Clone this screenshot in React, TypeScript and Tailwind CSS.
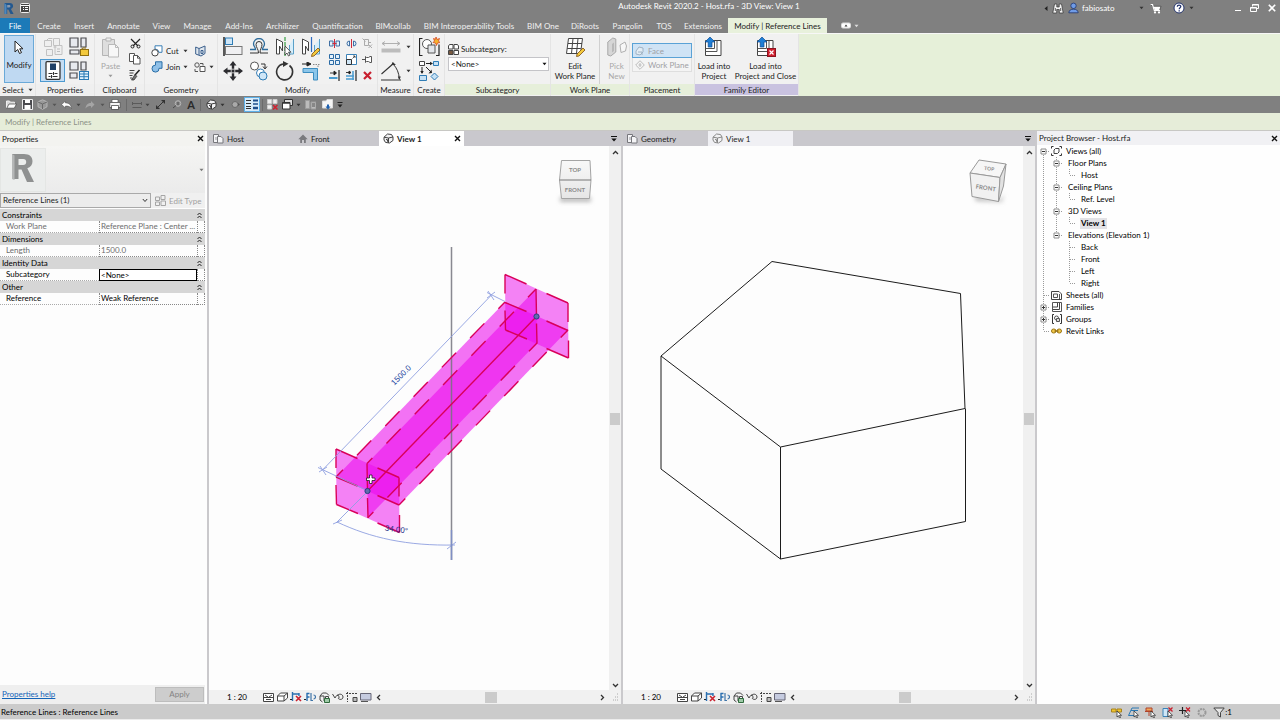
import React from "react";
import type { ReactNode } from "react";

/* ---------- shared pieces ---------- */

function Icon({ w = 12, h = 12, children }: { w?: number; h?: number; children: ReactNode }) {
  return (
    <svg width={w} height={h} viewBox={`0 0 ${w} ${h}`} fill="none" className="block shrink-0" aria-hidden="true">
      {children}
    </svg>
  );
}

function Caret({ color = "#333" }: { color?: string }) {
  return (
    <Icon w={5} h={4}>
      <path d="M.5 .8h4L2.500 3.200z" fill={color} />
    </Icon>
  );
}

function CloseIcon({ color = "#111" }: { color?: string }) {
  return (
    <Icon w={7} h={7}>
      <path d="M1 1l5 5M6 1L1 6" stroke={color} strokeWidth="1.400" />
    </Icon>
  );
}

function PagesIcon() {
  return (
    <Icon w={11} h={11}>
      <path d="M.5 1.500h5v8h-5z" fill="#f4f4f6" stroke="#77777c" />
      <path d="M4.500 3.500h3.500l2 2v4.500h-5.500z" fill="#f4f4f6" stroke="#77777c" />
      <path d="M3 4v3" stroke="#99999e" />
    </Icon>
  );
}

function HomeIcon() {
  return (
    <Icon w={10} h={10}>
      <path d="M5 .5L.3 5.200h1.900V9h5.600V5.200h1.900z" fill="#7a7a7e" />
      <path d="M4 6h2v3H4z" fill="#c9c8cd" />
    </Icon>
  );
}

function BoxIcon({ color = "#444" }: { color?: string }) {
  return (
    <Icon w={11} h={11}>
      <path d="M1 4.200L4.500 1l4 .5L10 4v3.500L6.500 10l-4-.6L1 7z" fill="#f2f2f4" stroke={color} />
      <path d="M1 4.200l4.500.8v5M5.500 5L10 4" stroke={color} />
      <path d="M3 6.500l1.500.2v2" stroke={color} />
    </Icon>
  );
}

/* ---------- title bar ---------- */

function TitleBar() {
  return (
    <header className="flex h-[18px] items-center text-white">
      <div className="flex items-center gap-1.5 pb-0.5 pl-[3px]">
        <Icon w={11} h={13}>
          <path d="M1.500 1h5.300c2 0 3.300 1.200 3.300 3 0 1.500-.9 2.500-2.200 2.900L10.600 12H7.500L5.300 7.500H4.200V12H1.500z" fill="#24588f" />
          <path d="M4.200 3v2.400h2c.8 0 1.200-.5 1.200-1.200S7 3 6.200 3z" fill="#8b9aad" />
          <path d="M1.500 1l2 2v9h-2z" fill="#4d87bd" />
        </Icon>
        <Icon w={10} h={10}>
          <rect x=".5" y=".5" width="9" height="9" rx="1" fill="#444" stroke="#eee" />
          <path d="M1 2.500h8M3 4.500h1M5 4.500h3M3 6.500h1M5 6.500h3" stroke="#fff" />
        </Icon>
      </div>
      <h1 className="flex-1 pb-1.5 pl-[348px] text-center">Autodesk Revit 2020.2 - Host.rfa - 3D View: View 1</h1>
      <div className="flex w-[240px] items-center pb-0.5">
        <button aria-label="Collapse search" className="flex w-[12px] justify-center">
          <Icon w={4} h={5}>
            <path d="M3.500 0v5L.5 2.500z" fill="#222" />
          </Icon>
        </button>
        <button aria-label="Search" className="flex w-[12px] justify-center">
          <Icon w={12} h={11}>
            <path d="M2.500 1h2.300v3h2.400V1h2.300l1.700 9H7.300V6.500H4.700V10H.8z" fill="#f3f3f3" stroke="#333" strokeWidth=".7" />
            <path d="M3.300 5v3M8.700 5v3" stroke="#333" strokeWidth=".8" />
          </Icon>
        </button>
        <button className="flex flex-1 items-center gap-[3px] pl-1">
          <Icon w={11} h={12}>
            <circle cx="5.500" cy="3.800" r="2.700" fill="#6f9be6" stroke="#1f356d" strokeWidth=".8" />
            <path d="M.8 10.800c.3-2.600 2-3.600 4.700-3.600s4.400 1 4.700 3.600z" fill="#6f9be6" stroke="#1f356d" strokeWidth=".8" />
          </Icon>
          <span>fabiosato</span>
          <span className="flex flex-1 justify-end pr-px">
            <Caret color="#333" />
          </span>
        </button>
        <button aria-label="App store" className="flex w-[21px] justify-center">
          <Icon w={12} h={11}>
            <path d="M.5 1.500h2l1.800 6h5.200l1.500-4.200H3.200z" fill="#fff" stroke="#222" strokeWidth=".6" />
            <path d="M.5 1.500h2l1.800 6h5.700" stroke="#fff" strokeWidth="1.200" />
            <circle cx="5" cy="9.400" r="1.100" fill="#fff" />
            <circle cx="9" cy="9.400" r="1.100" fill="#fff" />
          </Icon>
        </button>
        <button aria-label="Help" className="flex w-[33px] items-center justify-center gap-1 pl-0.5">
          <Icon w={12} h={12}>
            <circle cx="6" cy="6" r="5" fill="#fff" stroke="#24346d" />
            <path d="M4.300 4.800c0-2.200 3.500-2.200 3.500-.2 0 1.200-1.600 1.200-1.600 2.600M6.200 8.200v1.200" stroke="#24346d" strokeWidth="1.300" />
          </Icon>
          <Caret color="#333" />
        </button>
        <div className="ml-auto flex items-center gap-[9px] pr-1 pl-9">
          <button aria-label="Minimize">
            <Icon w={6} h={8}>
              <path d="M0 6.500h6" stroke="#fff" />
            </Icon>
          </button>
          <button aria-label="Restore">
            <Icon w={9} h={8}>
              <path d="M2.500 2.500v-2h6v4h-2M2 1h6.500" stroke="#fff" />
              <path d="M.5 3.500h6v4h-6zM.5 4h6" stroke="#fff" />
            </Icon>
          </button>
          <button aria-label="Close">
            <Icon w={8} h={8}>
              <path d="M.8.8l6.400 6.400M7.200.8L.8 7.200" stroke="#fff" strokeWidth="1.600" />
            </Icon>
          </button>
        </div>
      </div>
    </header>
  );
}

const RIBBON_TABS: [string, string][] = [
  ["Create", "w-[38px]"],
  ["Insert", "w-[32px]"],
  ["Annotate", "w-[47px]"],
  ["View", "w-[29px]"],
  ["Manage", "w-[43px]"],
  ["Add-Ins", "w-[40px]"],
  ["Archilizer", "w-[47px]"],
  ["Quantification", "w-[63px]"],
  ["BIMcollab", "w-[48px]"],
  ["BIM Interoperability Tools", "w-[104px]"],
  ["BIM One", "w-[44px]"],
  ["DiRoots", "w-[40px]"],
  ["Pangolin", "w-[45px]"],
  ["TQS", "w-[28px]"],
  ["Extensions", "w-[50px]"],
];

function RibbonTabs() {
  return (
    <nav className="flex h-[15px] items-stretch whitespace-nowrap text-[#f0f0f0]">
      <button className="w-[30px] bg-[#1c7ab8] text-white">File</button>
      {RIBBON_TABS.map(([label, width]) => (
        <button key={label} className={`flex items-center justify-center ${width}`}>
          {label}
        </button>
      ))}
      <button className="flex w-[99px] items-center justify-center bg-[#e8f1dc] text-[#222]">Modify | Reference Lines</button>
      <button aria-label="Ribbon display" className="ml-3.5 flex items-center gap-[3px]">
        <Icon w={10} h={7}>
          <rect x=".5" y="1" width="9" height="5" rx="1.500" fill="#fff" stroke="#ddd" />
          <path d="M3.500 4.500L5 2.500l1.500 2z" fill="#333" />
        </Icon>
        <Caret color="#ddd" />
      </button>
    </nav>
  );
}

/* ---------- ribbon ---------- */

type Tone = "plain" | "green" | "violet";

function Panel({ title, width, tone = "plain", caret, children }: { title: string; width: string; tone?: Tone; caret?: boolean; children: ReactNode }) {
  const label =
    tone === "green" ? "bg-[#e6efda]" : tone === "violet" ? "bg-[#c9c2e0]" : "bg-[#efefef]";
  return (
    <section className={`flex shrink-0 flex-col border-r border-[#e4e4e4] bg-[#f1f1f1] pb-px ${width}`}>
      <div className="flex min-h-0 flex-1 items-start pt-px">{children}</div>
      <h2 className={`flex h-[11px] shrink-0 items-center justify-center gap-1 whitespace-nowrap ${label}`}>
        {title}
        {caret && <Caret />}
      </h2>
    </section>
  );
}

function Tool({ label, size = "h-[23px] w-[26px]", children }: { label: string; size?: string; children: ReactNode }) {
  return (
    <button aria-label={label} className={`flex items-center justify-center ${size}`}>
      {children}
    </button>
  );
}

function PropertyTools() {
  return (
    <div className="grid grid-cols-[26px_26px] gap-y-px pl-1">
      <Tool label="Family category">
        <Icon w={20} h={20}>
          <path d="M1.500 3.500h7v6h-7zM10.500 1.500h6v7h-6zM3.500 12.500h6v6h-6zM12 8.500h7v9h-7z" fill="#efefef" stroke="#c2c2c2" />
          <path d="M3.500 3.500l2-2h4M10.500 10h3M14 12h3M14 14.500h3" stroke="#bdbdbd" />
        </Icon>
      </Tool>
      <Tool label="Type properties">
        <Icon w={20} h={20}>
          <path d="M1 1h8v9H1zM12 1h5v9h-5zM1 13h9v4H1z" fill="#e7e9ee" stroke="#4c4c50" strokeWidth="1.200" />
          <rect x="11.500" y="12.500" width="8" height="6" fill="#f3c93c" stroke="#8f6f10" />
          <path d="M12 12.500l2-1.500h3" stroke="#8f6f10" />
        </Icon>
      </Tool>
      <Tool label="Properties" size="h-[23px] w-[25px] border border-[#4d9ad0] bg-[#c5ddf3]">
        <Icon w={16} h={19}>
          <rect x="1" y=".7" width="14" height="17.600" rx="1" fill="#fff" stroke="#333" strokeWidth="1.300" />
          <path d="M5 2.500h6v6.500H5z" fill="#1e3f66" />
          <path d="M3.500 12.500h4M9.500 12.500h3M3.500 15.500h2M7.500 15.500h5M8.500 11v3M6.500 14v3" stroke="#333" />
        </Icon>
      </Tool>
      <Tool label="Family types">
        <Icon w={20} h={20}>
          <path d="M1 1h8v8H1zM12 1h5v8h-5zM1 12h7v5H1z" fill="#e7e9ee" stroke="#4c4c50" strokeWidth="1.200" />
          <rect x="10.500" y="10.500" width="9" height="8" fill="#e2f2fc" stroke="#2a7ab4" />
          <path d="M10.500 13h9M10.500 15.700h9M15 10.500v8" stroke="#2a7ab4" />
        </Icon>
      </Tool>
    </div>
  );
}

function ClipboardTools() {
  return (
    <>
      <button className="flex w-[32px] flex-col items-center pt-0.5 text-[#a6a6a6]">
        <Icon w={19} h={21}>
          <path d="M1.500 2.500h12v16h-12z" fill="#dedede" stroke="#b5b5b5" />
          <path d="M5 1h5v3H5z" fill="#eee" stroke="#b5b5b5" />
          <path d="M7.500 7.500h7l3 3v9.500h-10z" fill="#f7f7f7" stroke="#b9b9b9" />
          <path d="M14.500 7.500v3h3" stroke="#b9b9b9" />
        </Icon>
        <span className="mt-0.5 mb-0.5">Paste</span>
        <Caret color="#999" />
      </button>
      <div className="flex w-[18px] flex-col items-center">
        <Tool label="Cut to clipboard" size="h-4 w-4">
          <Icon w={11} h={11}>
            <path d="M1 1l7 7M10 1L3 8" stroke="#222" strokeWidth="1.200" />
            <circle cx="2.500" cy="8.500" r="1.500" stroke="#222" />
            <circle cx="8.500" cy="8.500" r="1.500" stroke="#222" />
          </Icon>
        </Tool>
        <Tool label="Copy to clipboard" size="h-4 w-4">
          <Icon w={12} h={12}>
            <path d="M.5.5h5v8h-5z" fill="#fff" stroke="#555" />
            <path d="M4.500 2.500h4l2.500 2.500v6h-6.500z" fill="#fff" stroke="#555" />
            <path d="M8.500 2.500v2.700H11" stroke="#555" />
          </Icon>
        </Tool>
        <Tool label="Match type" size="h-4 w-4">
          <Icon w={12} h={12}>
            <path d="M.5 1.500h5M.5 4h4M.5 6.500h3M1 9h2" stroke="#444" />
            <path d="M10.500 1L6 6" stroke="#222" strokeWidth="1.500" />
            <path d="M6 5.500l1.800 1.800L5 11H2.500z" fill="#777" stroke="#222" strokeWidth=".7" />
          </Icon>
        </Tool>
      </div>
    </>
  );
}

function GeometryTools() {
  return (
    <div className="grid grid-cols-[38px_28px] pt-2 pl-1.5">
      <button className="flex h-4 items-center gap-[3px] pr-px">
        <Icon w={12} h={12}>
          <path d="M4 .8h7v6.500H8A4 4 0 0 0 4 4z" fill="#fff" stroke="#3b7fb6" />
          <circle cx="4" cy="7.800" r="3.200" fill="#fff" stroke="#444" />
        </Icon>
        <span className="flex-1 text-left">Cut</span>
        <Caret />
      </button>
      <Tool label="Apply coping" size="h-4 w-[22px]">
        <Icon w={11} h={12}>
          <path d="M.7 2L4 3.500 10 1v7.500L6 11 .7 9z" fill="#dfe7ef" stroke="#3b5f8c" />
          <path d="M4 3.500V10M6 5.500h2v3H6z" stroke="#3b5f8c" />
        </Icon>
      </Tool>
      <button className="flex h-4 items-center gap-[3px] pr-px">
        <Icon w={12} h={12}>
          <path d="M4.500.8H11v6.500H8a3.500 3.500 0 1 1-3.500-3.200z" fill="#8fc0e8" stroke="#2b6ea6" />
        </Icon>
        <span className="flex-1 text-left">Join</span>
        <Caret />
      </button>
      <button aria-label="Split face" className="flex h-4 items-center gap-[3px] pl-[5px]">
        <Icon w={12} h={11}>
          <circle cx="3" cy="3" r="2.200" stroke="#555" />
          <path d="M6 4.500h5v5H6z" fill="#fff" stroke="#555" />
          <path d="M1 7v2.500h3M6 1.500h3v2" stroke="#555" />
        </Icon>
        <Caret />
      </button>
    </div>
  );
}

function ModifyTools() {
  return (
    <div className="flex pl-0.5">
      <div className="grid grid-cols-4 gap-y-px">
        <Tool label="Align">
          <Icon w={20} h={19}>
            <path d="M1 0v19" stroke="#333" strokeWidth="1.600" />
            <rect x="2.500" y="1" width="7" height="6.500" fill="#cfe6f7" stroke="#2f7cb5" />
            <rect x="2.500" y="9.500" width="16.500" height="8" fill="#f0f0f2" stroke="#777" />
          </Icon>
        </Tool>
        <Tool label="Offset">
          <Icon w={20} h={17}>
            <path d="M1 11.500h5.500C6.500 9 4.500 8.500 4.500 6a5.500 5.500 0 0 1 11 0c0 2.500-2 3-2 5.500H19" stroke="#2e6c9c" strokeWidth="1.300" />
            <path d="M1 15h8.500C9.500 11 7 9.500 7 6.500a3 3 0 0 1 6 0c0 3-2 4.500-2 8.500h8" stroke="#333" />
          </Icon>
        </Tool>
        <Tool label="Mirror - pick axis">
          <Icon w={20} h={20}>
            <path d="M1.500 2v15h3V9l3 5V5z" fill="#fff" stroke="#444" />
            <path d="M18.500 2v15h-4V8" fill="#d8eefa" stroke="#5aa0c8" />
            <path d="M10 0v19" stroke="#37a043" strokeWidth="1.200" strokeDasharray="4 1" />
            <path d="M10 9v9l2-2 1.500 3 1.500-1-1.500-2.800H16z" fill="#fff" stroke="#333" strokeWidth=".8" />
          </Icon>
        </Tool>
        <Tool label="Mirror - draw axis">
          <Icon w={20} h={20}>
            <path d="M1.500 2v15h3V9l3 5V5z" fill="#fff" stroke="#444" />
            <path d="M18.500 2v15h-5V8" fill="#d8eefa" stroke="#5aa0c8" />
            <path d="M10.500 0v15" stroke="#2d6cc0" strokeWidth="1.200" />
            <path d="M11 17l6-6 2 2-6 6-2.500.5z" fill="#f3c93c" stroke="#7a4b12" strokeWidth=".8" />
          </Icon>
        </Tool>
        <Tool label="Move">
          <Icon w={20} h={20}>
            <path d="M10 0l3.500 4.500h-2.300v3.300H8.800V4.500H6.500zM10 20l3.500-4.500h-2.300v-3.300H8.800v3.300H6.500zM0 10l4.500-3.500v2.300h3.300v2.400H4.500v2.300zM20 10l-4.500-3.500v2.300h-3.300v2.400h3.300v2.300z" fill="#2c2c30" />
            <path d="M8.500 8.500h3v3h-3z" fill="#2c2c30" />
          </Icon>
        </Tool>
        <Tool label="Copy">
          <Icon w={20} h={20}>
            <circle cx="5.500" cy="5" r="4" fill="#fff" stroke="#555" />
            <circle cx="11.500" cy="12" r="4" fill="#fff" stroke="#3b7fb6" />
            <circle cx="14" cy="15" r="4" fill="#cfe6f7" stroke="#2f7cb5" />
            <path d="M12 3h4v4M14 5.500l2 2.500 2-2.500" stroke="#333" />
          </Icon>
        </Tool>
        <Tool label="Rotate">
          <Icon w={20} h={20}>
            <path d="M14.500 4.500A8 8 0 1 1 8 3" stroke="#333" strokeWidth="1.600" />
            <path d="M8 0l5.500 2.800L8 6z" fill="#333" />
          </Icon>
        </Tool>
        <Tool label="Trim / extend to corner">
          <Icon w={20} h={19}>
            <path d="M1 2h8M6 0l4 2-4 2z" stroke="#222" fill="#222" />
            <path d="M2 6.500h14.500V18h-4v-7.500H2z" fill="#8cc6ea" stroke="#3c8dc0" />
            <path d="M17 5V2.500M12 2.500h7" stroke="#888" strokeDasharray="1.500 1" />
          </Icon>
        </Tool>
      </div>
      <div className="grid grid-cols-[17px_16px_16px] grid-rows-[16px_16px_16px] pl-0.5">
        <Tool label="Split element" size="h-4 w-4">
          <Icon w={11} h={9}>
            <path d="M.5 2h3.500v5H.500zM10.500 2H7v5h3.500z" fill="#e4f1fb" stroke="#3f6fa3" />
            <path d="M5.500 0v9M3.500 4.500h4" stroke="#d02a3a" />
          </Icon>
        </Tool>
        <Tool label="Split with gap" size="h-4 w-4">
          <Icon w={11} h={9}>
            <path d="M3.500 2A2.500 2.500 0 1 0 3.500 7zM7.500 2a2.500 2.500 0 1 1 0 5z" fill="#e4f1fb" stroke="#3f6fa3" />
            <path d="M5.500 0v9" stroke="#d02a3a" />
          </Icon>
        </Tool>
        <Tool label="Unpin" size="h-4 w-4">
          <Icon w={11} h={11}>
            <path d="M2.500 1.500h4v6h-4zM6.500 4.500h2.500M.5.500l3 3M6.500 6.500l3.500 3.500M10 6.500L6.500 10" stroke="#ababab" />
          </Icon>
        </Tool>
        <Tool label="Array" size="h-4 w-4">
          <Icon w={11} h={11}>
            <path d="M.5.5h4v4h-4zM6.500.5h4v4h-4zM.5 6.500h4v4h-4zM6.500 6.500h4v4h-4z" fill="#e4f1fb" stroke="#2a6aa5" />
          </Icon>
        </Tool>
        <Tool label="Scale" size="h-4 w-4">
          <Icon w={11} h={11}>
            <path d="M.5.5h10v10H.500z" fill="#fff" stroke="#3b82b8" />
            <path d="M.5 5.500h5v5h-5z" fill="#cfe6f7" stroke="#333" />
            <path d="M6.500 4.500L9 2M7 2h2v2" stroke="#333" strokeWidth=".8" />
          </Icon>
        </Tool>
        <Tool label="Pin" size="h-4 w-4">
          <Icon w={10} h={9}>
            <path d="M3.500 1.500l1 1h2l1.500-1h1.500v6H8l-1.500-1h-2l-1 1zM0 4.500h3.500" fill="#fff" stroke="#555" />
          </Icon>
        </Tool>
        <Tool label="Trim single element" size="h-4 w-4">
          <Icon w={11} h={11}>
            <path d="M1 3h6M5 1l2.500 2L5 5z" stroke="#222" fill="#222" strokeWidth=".9" />
            <path d="M0 8h8.500" stroke="#4a9cd0" strokeWidth="2" />
            <path d="M10 0v11" stroke="#333" strokeWidth="1.300" />
          </Icon>
        </Tool>
        <Tool label="Trim multiple elements" size="h-4 w-4">
          <Icon w={11} h={11}>
            <path d="M0 2.500h4M3 1l2 1.500L3 4z" stroke="#222" fill="#222" strokeWidth=".9" />
            <path d="M0 6h8M0 9h8M7 1v9" stroke="#4a9cd0" strokeWidth="1.500" />
            <path d="M10 0v11" stroke="#333" strokeWidth="1.300" />
          </Icon>
        </Tool>
        <Tool label="Delete" size="h-4 w-4">
          <Icon w={9} h={9}>
            <path d="M1 1l7 7M8 1L1 8" stroke="#c81f2e" strokeWidth="2.200" />
          </Icon>
        </Tool>
      </div>
    </div>
  );
}

function MeasureTools() {
  return (
    <div className="flex w-full flex-col pl-[3px]">
      <button aria-label="Measure distance" className="flex h-[24px] items-center gap-[5px]">
        <Icon w={20} h={12}>
          <path d="M1 2.500h18M4 .5L1 2.500l3 2M16 .5l3 2-3 2" stroke="#b0b0b0" />
          <path d="M.5 7.500h19v4H.500z" fill="#bcbcbc" />
        </Icon>
        <Caret />
      </button>
      <button aria-label="Measure angle" className="flex h-[24px] items-center gap-[5px]">
        <Icon w={20} h={20}>
          <path d="M.5 13L13 2M0 19h20" stroke="#333" strokeWidth="1.100" />
          <path d="M12 3c4 4 6 9 6.300 15" stroke="#333" />
          <path d="M10.500 4l1-3 3.500 3zM16.800 15.500h3L18.400 19z" fill="#333" />
        </Icon>
        <Caret />
      </button>
    </div>
  );
}

function CreateTools() {
  return (
    <div className="flex w-full flex-col items-center gap-px">
      <Tool label="Create similar">
        <Icon w={21} h={20}>
          <path d="M3.500 1.500h-3v17h3M17 18.500h3v-11" stroke="#222" strokeWidth="1.200" />
          <circle cx="8" cy="7" r="4.500" fill="#fff" stroke="#555" />
          <path d="M9 8h7v8H9z" fill="#e3e6ea" stroke="#555" />
          <path d="M17 0l1 2.500 2.500-1-1 2.500 1.500 1.500-2.500.5-1 2.500-1-2.500-2.500-.5L15.500 4l-1-2.500 2 .8z" fill="#f6b42c" stroke="#d4451f" strokeWidth=".8" />
        </Icon>
      </Tool>
      <Tool label="Create group">
        <Icon w={20} h={20}>
          <path d="M.5.500h5v4h-5z" fill="#fff" stroke="#444" />
          <path d="M7 2.500h6M3 6v6M7 6l5 5" stroke="#222" />
          <path d="M11 .8l3 1.700-3 1.700zM1.300 10h3.400L3 13zM9.500 12.500L13 12l-.5-3.500z" fill="#222" />
          <path d="M14.500.500h5v4h-5z" fill="#c6e1f5" stroke="#2f7cb5" />
          <path d="M.5 14.500h7v5h-7z" fill="#c6e1f5" stroke="#2f7cb5" />
          <path d="M15.500 12l3.500 3.500-3.500 3.500-3.500-3.500z" fill="#c6e1f5" stroke="#2f7cb5" />
        </Icon>
      </Tool>
    </div>
  );
}

function LoadIcon({ closing }: { closing?: boolean }) {
  return (
    <Icon w={20} h={20}>
      <path d="M1.500 3.500H17v15H1.500z" fill="#fff" stroke="#444" />
      <path d="M1.500 11.500h9v-8M13 3.500v11H1.500" stroke="#555" />
      <path d="M6 0l5 5H8v5H4.200V5H1z" fill="#1f7fd6" stroke="#0e4c92" strokeWidth=".7" />
      {closing && (
        <>
          <rect x="11.500" y="11.500" width="8" height="8" fill="#d01f2e" stroke="#8c1420" />
          <path d="M13.500 13.500l4 4M17.500 13.500l-4 4" stroke="#fff" strokeWidth="1.200" />
        </>
      )}
    </Icon>
  );
}

function Ribbon() {
  return (
    <div className="flex h-[63px] border-t border-[#f7f7f7] bg-[#e6f0d9] text-[#222]">
      <Panel title="Select" width="w-[36px]" caret>
        <button className="ml-1 flex h-[48px] w-[30px] flex-col items-center border border-[#6aa9d8] bg-[#bfd9f2] pt-1">
          <Icon w={10} h={15}>
            <path d="M1 1v11l2.700-2.500 1.800 4 2-.9-1.800-3.800H9z" fill="#fff" stroke="#222" />
          </Icon>
          <span className="mt-1">Modify</span>
        </button>
      </Panel>
      <Panel title="Properties" width="w-[59px]">
        <PropertyTools />
      </Panel>
      <Panel title="Clipboard" width="w-[50px]">
        <ClipboardTools />
      </Panel>
      <Panel title="Geometry" width="w-[73px]">
        <GeometryTools />
      </Panel>
      <Panel title="Modify" width="w-[160px]">
        <ModifyTools />
      </Panel>
      <Panel title="Measure" width="w-[36px]">
        <MeasureTools />
      </Panel>
      <Panel title="Create" width="w-[31px]">
        <CreateTools />
      </Panel>
      <Panel title="Subcategory" width="w-[106px]" tone="green">
        <div className="flex flex-1 flex-col gap-0.5 pt-2 pr-px pl-[3px]">
          <label htmlFor="subcategory" className="flex items-center gap-0.5">
            <Icon w={11} h={11}>
              <path d="M.5 5V2l1-1.500H5V5zM6 5V.500h3.500l1 1.500v3zM6 6.500h4.500v4H6z" fill="#fff" stroke="#444" />
              <path d="M.5 6.500H5v4H.500z" fill="#7a5a40" stroke="#444" />
            </Icon>
            Subcategory:
          </label>
          <div className="relative">
            <select id="subcategory" className="block h-[14px] w-full appearance-none border border-[#c4c4c8] bg-white pl-0.5 leading-[12px]">
              <option>&lt;None&gt;</option>
            </select>
            <span className="pointer-events-none absolute top-[5px] right-0.5">
              <Caret color="#111" />
            </span>
          </div>
        </div>
      </Panel>
      <Panel title="Work Plane" width="w-[79px]" tone="green">
        <button className="flex h-[49px] w-[49px] flex-col items-center border-r border-[#d0d0d0] pt-0.5 leading-[10px]">
          <Icon w={20} h={20}>
            <path d="M3.500 1.500h14l-2 15H1.500z" fill="#fff" stroke="#444" />
            <path d="M3 6.500h14M2.300 11.500h13.500M8 1.500l-1.500 15M13 1.500l-1.500 15" stroke="#444" />
            <path d="M12 17l6-6 2 2-6 6-2.500.5z" fill="#f3c93c" stroke="#7a4b12" strokeWidth=".8" />
          </Icon>
          <span className="mt-1 whitespace-nowrap">
            Edit
            <br />
            Work Plane
          </span>
        </button>
        <button className="flex w-[29px] flex-col items-center pt-0.5 pl-1 leading-[10px] text-[#a8a8a8]">
          <Icon w={20} h={20}>
            <path d="M.8 5l5-4 3 1v13l-5 4-3-1z" fill="#d6d6d6" stroke="#a9a9a9" />
            <path d="M5 7l2-1.500V14L5 15.500z" fill="#b9b9b9" />
            <path d="M13 8l5-3 1.500 4-1 5-4.500 1.500z" fill="#f7f7f7" stroke="#b0b0b0" />
          </Icon>
          <span className="mt-1">
            Pick
            <br />
            New
          </span>
        </button>
      </Panel>
      <Panel title="Placement" width="w-[65px]" tone="green">
        <div className="mt-2 ml-0.5 flex w-[60px] flex-col text-[#a0a0a4]">
          <button className="flex h-[15px] items-center gap-[3px] border border-[#5aa2d6] bg-[#cfe3f5] pl-0.5">
            <Icon w={10} h={10}>
              <path d="M1 5l3-4 4 1v4L5 9 1 8zM3 6h4v3" fill="#e3edf5" stroke="#9fb2c4" />
            </Icon>
            Face
          </button>
          <button className="flex h-[14px] items-center gap-[3px] border border-t-0 border-[#dedede] bg-[#f4f4f4] pl-0.5 whitespace-nowrap">
            <Icon w={10} h={10}>
              <path d="M5 .7L9.300 5 5 9.300.7 5zM5 3v4M3.500 5h3" stroke="#bcbcbc" />
            </Icon>
            Work Plane
          </button>
        </div>
      </Panel>
      <Panel title="Family Editor" width="w-[104px]" tone="violet">
        <button className="flex w-[38px] flex-col items-center pt-0.5 leading-[10px]">
          <LoadIcon />
          <span className="mt-1 whitespace-nowrap">
            Load into
            <br />
            Project
          </span>
        </button>
        <button className="flex w-[65px] flex-col items-center pt-0.5 leading-[10px]">
          <LoadIcon closing />
          <span className="mt-1 whitespace-nowrap">
            Load into
            <br />
            Project and Close
          </span>
        </button>
      </Panel>
    </div>
  );
}

/* ---------- quick access toolbar ---------- */

function Quick({ label, width, children }: { label: string; width: string; children: ReactNode }) {
  return (
    <button aria-label={label} className={`flex h-full shrink-0 items-center justify-center ${width}`}>
      {children}
    </button>
  );
}

function Divider() {
  return <span className="mx-[2px] h-3 w-px shrink-0 bg-[#6b6b6b]" />;
}

function QuickAccess() {
  return (
    <div role="toolbar" aria-label="Quick access" className="flex h-[17px] items-center bg-[#808080] pl-[3px]">
      <Quick label="Open" width="w-[16px]">
        <Icon w={11} h={9}>
          <path d="M.5 8V1h3l1 1.200h4V4" fill="#d9d9d9" stroke="#f0f0f0" />
          <path d="M.8 8.200L3 4h7.500L8.300 8.200z" fill="#fff" stroke="#444" strokeWidth=".7" />
        </Icon>
      </Quick>
      <Quick label="Save" width="w-[16px]">
        <Icon w={11} h={11}>
          <path d="M.5.500h10v10H.500z" fill="#4a4a4e" stroke="#eee" />
          <path d="M3 1h5v3H3zM2.500 6h6v4h-6z" fill="#fff" />
        </Icon>
      </Quick>
      <Quick label="Synchronize" width="w-[15px]">
        <Icon w={11} h={11}>
          <path d="M5.500.800l4.500 2v5l-4.500 2.500L1 7.800v-5z" fill="#999" stroke="#b5b5b5" />
          <path d="M1 3l4.500 2L10 3M5.500 5v5" stroke="#6a6a6a" />
        </Icon>
      </Quick>
      <Quick label="Synchronize options" width="w-[8px]"><Caret color="#555" /></Quick>
      <Quick label="Undo" width="w-[17px]">
        <Icon w={11} h={8}>
          <path d="M4.500 0v2C8 2 10 3.500 10.500 7.500 9 5.500 7.500 5 4.500 5v2L.5 3.500z" fill="#fff" stroke="#444" strokeWidth=".5" />
        </Icon>
      </Quick>
      <Quick label="Undo history" width="w-[6px]"><Caret color="#444" /></Quick>
      <Quick label="Redo" width="w-[17px]">
        <Icon w={10} h={8}>
          <path d="M6 0v2C3 2 1 3.500.5 7.500 2 5.500 3.500 5 6 5v2l3.500-3.500z" fill="#a5a5a5" />
        </Icon>
      </Quick>
      <Quick label="Redo history" width="w-[8px]"><Caret color="#555" /></Quick>
      <Quick label="Print" width="w-[18px]">
        <Icon w={12} h={11}>
          <path d="M3 .5h6v3H3z" fill="#fff" stroke="#444" strokeWidth=".6" />
          <path d="M.8 3.500h10.400v5H.800z" fill="#f4f4f4" stroke="#333" strokeWidth=".6" />
          <path d="M2.500 6.500h7v4h-7z" fill="#fff" stroke="#333" strokeWidth=".7" />
        </Icon>
      </Quick>
      <Divider />
      <Quick label="Measure" width="w-[15px]">
        <Icon w={10} h={8}>
          <path d="M.5 1v3M9.500 1v3M.5 2.500h9M.5 6.500h9" stroke="#5a5a5a" />
        </Icon>
      </Quick>
      <Quick label="Measure options" width="w-[7px]"><Caret color="#444" /></Quick>
      <Quick label="Aligned dimension" width="w-[18px]">
        <Icon w={11} h={11}>
          <path d="M1.500 9.500l8-8" stroke="#333" />
          <path d="M1 6v4h4zM10 5V1H6z" fill="#333" />
        </Icon>
      </Quick>
      <Quick label="Tag" width="w-[15px]">
        <Icon w={10} h={9}>
          <circle cx="6" cy="3.500" r="2.800" fill="#8a8a8a" stroke="#b5b5b5" />
          <path d="M6 2v3M1 8l3-2.500" stroke="#4a4a4a" />
        </Icon>
      </Quick>
      <button aria-label="Text" className="w-[14px] text-center text-[11px] leading-3 font-bold text-[#2a2a2a]">A</button>
      <Divider />
      <Quick label="Default 3D view" width="w-[16px]">
        <BoxIcon color="#3a3a3a" />
      </Quick>
      <Quick label="3D options" width="w-[7px]"><Caret color="#333" /></Quick>
      <Quick label="Section" width="w-[18px]">
        <Icon w={9} h={9}>
          <circle cx="4" cy="4.500" r="3" fill="#a9a9a9" stroke="#6a6a6a" />
          <path d="M7 3l2 1.500L7 6z" fill="#555" />
        </Icon>
      </Quick>
      <Quick label="Thin lines" width="w-[16px]">
        <span className="flex h-[15px] w-[16px] items-center justify-center border border-[#5db0e8] bg-[#d8ecfa]">
          <Icon w={12} h={11}>
            <path d="M0 1.500h5M0 4.500h5M0 7.500h5M0 9.500h5" stroke="#333" />
            <path d="M7 1.500h5" stroke="#1d4f8c" strokeWidth="2" />
            <path d="M7 5h5" stroke="#1d4f8c" strokeWidth="1.500" />
            <path d="M7 9h5" stroke="#1d4f8c" strokeWidth="2.500" />
          </Icon>
        </span>
      </Quick>
      <Divider />
      <Quick label="Close hidden windows" width="w-[15px]">
        <Icon w={11} h={11}>
          <path d="M.5.500h4v4h-4zM6 .500h4v4H6zM.5 6h4v4h-4z" fill="#eee" stroke="#ccc" />
          <path d="M6 6l4.500 4.500M10.500 6L6 10.500" stroke="#d3202f" strokeWidth="1.500" />
        </Icon>
      </Quick>
      <Quick label="Switch windows" width="w-[15px]">
        <Icon w={11} h={11}>
          <path d="M2.500.500h8v6h-8z" fill="#ddd" stroke="#333" />
          <path d="M.5 3.500h7.500v6.500H.500z" fill="#fff" stroke="#333" />
          <path d="M.5 4h7.500" stroke="#333" strokeWidth="1.500" />
        </Icon>
      </Quick>
      <Quick label="Window list" width="w-[6px]"><Caret color="#333" /></Quick>
      <Quick label="User interface" width="w-[18px]">
        <Icon w={11} h={10}>
          <path d="M.5.500h4v8h-4zM6 2h5v7H6z" fill="#bbb" stroke="#9c9c9c" />
          <path d="M7 4h3M7 6h3" stroke="#555" />
        </Icon>
      </Quick>
      <Quick label="Load family" width="w-[16px]">
        <Icon w={11} h={11}>
          <path d="M.5 2h3.500l1-1.500h5.500V9H.500z" fill="#f6f6f6" stroke="#ddd" />
          <path d="M3.500 7.500h1.500V5.500h2v2h1.500L6 10.500z" fill="#1d5fae" />
        </Icon>
      </Quick>
      <Quick label="Customize" width="w-[10px]">
        <Icon w={6} h={6}>
          <path d="M.5.500h5" stroke="#222" />
          <path d="M.5 2.500h5L3 5.500z" fill="#222" />
        </Icon>
      </Quick>
    </div>
  );
}

/* ---------- properties palette ---------- */

const PROPERTY_GROUPS = [
  { group: "Constraints", name: "Work Plane", value: "Reference Plane : Center ...", state: "locked" },
  { group: "Dimensions", name: "Length", value: "1500.0", state: "locked" },
  { group: "Identity Data", name: "Subcategory", value: "<None>", state: "focused" },
  { group: "Other", name: "Reference", value: "Weak Reference", state: "normal" },
];

function PropertiesPalette() {
  return (
    <aside className="flex w-[207px] shrink-0 flex-col bg-[#fdfdfd] pr-0.5">
      <div className="flex h-[15px] items-center justify-between bg-[#f3f3f0] pr-[1px] pl-0.5">
        <h2>Properties</h2>
        <button aria-label="Close properties">
          <CloseIcon />
        </button>
      </div>
      <div className="flex h-[47px] items-center justify-between bg-linear-to-b from-[#f5f5f3] to-[#ebebeb] pr-px">
        <div className="flex h-[44px] w-[46px] justify-center border border-[#e4e6e4] bg-[#eceeed] pt-1">
          <Icon w={24} h={32}>
            <path d="M1 1h12c5.500 0 8.500 2.800 8.500 7.200 0 3.600-2 6-5.200 7L23 29h-7l-5.500-12.500H7.500V26H1z" fill="#8f9191" />
            <path d="M7.500 6v6h4.700c2 0 3-1.200 3-3s-1-3-3-3z" fill="#eceeed" />
            <path d="M1 1l2.500 1.500V27L1 26z" fill="#b5b7b7" />
          </Icon>
        </div>
        <Caret color="#777" />
      </div>
      <div className="flex h-[15px] items-center gap-1 bg-[#f0f0f0]">
        <div className="relative w-[151px]">
          <select aria-label="Element filter" className="block h-[15px] w-full appearance-none border border-[#a9a9a9] bg-[#ececec] pl-0.5 leading-[13px]">
            <option>Reference Lines (1)</option>
          </select>
          <span className="pointer-events-none absolute top-[5px] right-[3px]">
            <Icon w={6} h={5}>
              <path d="M.8 1L3 3.500 5.200 1" stroke="#333" />
            </Icon>
          </span>
        </div>
        <button className="flex flex-1 items-center gap-[3px] whitespace-nowrap text-[#a0a0a0]">
          <Icon w={11} h={11}>
            <path d="M.5 2h4v3.500h-4zM6 .500h4v4H6zM.5 7h4v3.500h-4zM6 6h4.500v4.500H6z" stroke="#a5a5a5" />
          </Icon>
          Edit Type
        </button>
      </div>
      <table className="mt-px w-full table-fixed border-separate border-spacing-0 leading-[11px]">
        <colgroup>
          <col className="w-[99px]" />
          <col />
          <col className="w-[8px]" />
        </colgroup>
        {PROPERTY_GROUPS.map(({ group, name, value, state }) => (
          <tbody key={group}>
            <tr className="h-3 bg-[#d6d6d6]">
              <th colSpan={2} className="p-0 pl-0.5 text-left font-normal text-black">
                {group}
              </th>
              <td className="p-0">
                <Icon w={5} h={7}>
                  <path d="M.5 3L2.500 1l2 2M.5 6l2-2 2 2" stroke="#222" />
                </Icon>
              </td>
            </tr>
            <tr className={`h-3 ${state === "locked" ? "text-[#6e6e6e]" : "text-black"}`}>
              <th scope="row" className="border-b border-dotted border-[#aaa] p-0 pl-1.5 text-left font-normal">
                {name}
              </th>
              <td className={`p-0 pl-px whitespace-nowrap ${state === "focused" ? "border border-black bg-white leading-[10px]" : "border-b border-l border-dotted border-[#888]"}`}>
                {value}
              </td>
              <td className="border-x border-b border-dotted border-[#888] p-0" />
            </tr>
          </tbody>
        ))}
      </table>
      <div className="mt-auto flex h-[19px] items-center justify-between bg-[#efefef] pr-px pb-px pl-0.5">
        <a href="#help" className="text-[#1464b8] underline">
          Properties help
        </a>
        <button className="h-[15px] w-[49px] border border-[#bdbdbd] bg-[#cdcdcd] text-[#848484]">Apply</button>
      </div>
    </aside>
  );
}

/* ---------- view windows ---------- */

type ViewTab = { label: string; icon: ReactNode; state?: "active" | "current" };

function ViewControls() {
  return (
    <>
      <Tool label="Detail level" size="h-3 w-[14px]">
        <Icon w={11} h={9}>
          <path d="M.5.500h10v8H.500z" fill="#fff" stroke="#444" />
          <path d="M1 4.500h9M2 2l3 2M9 2L6 4M3 6.500h5" stroke="#444" />
        </Icon>
      </Tool>
      <Tool label="Visual style" size="h-3 w-[14px]">
        <Icon w={11} h={10}>
          <path d="M.5 4h6.500v5H.500zM.5 4l3-3h7L7 4M10.500 1v5L7 9" fill="#fff" stroke="#444" />
        </Icon>
      </Tool>
      <Tool label="Crop view off" size="h-3 w-[14px]">
        <Icon w={12} h={10}>
          <path d="M2.500 0v9M2 2h7M9 1v3" stroke="#2a6fb0" strokeWidth="1.400" />
          <path d="M6 4l5 5M11 4L6 9" stroke="#c9202e" strokeWidth="1.600" />
          <path d="M0 7.500h2" stroke="#222" />
        </Icon>
      </Tool>
      <Tool label="Show crop region" size="h-3 w-[14px]">
        <Icon w={12} h={10}>
          <path d="M3 1v8M2.500 1.500h3M3 5h2.500" stroke="#2a6fb0" strokeWidth="1.400" />
          <path d="M7 1v8M7 8.500h2M9.500 3a2 2 0 0 1 0 4" stroke="#3f75a8" strokeWidth="1.200" />
          <path d="M0 7.500h2" stroke="#222" />
        </Icon>
      </Tool>
      <Tool label="Lock 3D view" size="h-3 w-[14px]">
        <Icon w={11} h={11}>
          <path d="M1 4l2.500-3h4L10 3.500M1 4v4l2.500 2M1 4h4v5" stroke="#444" />
          <path d="M5.500 6.500h5v4h-5z" fill="#9fcaa8" stroke="#2f6a3c" />
          <path d="M6.500 6V4.500h3V6" stroke="#444" />
        </Icon>
      </Tool>
      <Tool label="Temporary hide" size="h-3 w-[14px]">
        <Icon w={12} h={8}>
          <path d="M.5 1l2.500 4c2-4 4-4 4 0M5 3c2-3 6-2 6 1s-4 3-5 1" stroke="#444" />
        </Icon>
      </Tool>
      <Tool label="Reveal constraints" size="h-3 w-[14px]">
        <Icon w={12} h={10}>
          <path d="M1.500 0v10M0 1.500h11" stroke="#444" strokeDasharray="2 1" />
          <path d="M7 5.500h4v4H7z" fill="#bbb" stroke="#444" />
        </Icon>
      </Tool>
      <Tool label="Preview visibility" size="h-3 w-[14px]">
        <Icon w={12} h={9}>
          <path d="M.5.500h10.500v6.500H.500z" fill="#c5cbe0" stroke="#667" />
          <path d="M1 8.500h7" stroke="#555" />
        </Icon>
      </Tool>
    </>
  );
}

function Chevron({ d }: { d: string }) {
  return (
    <Icon w={7} h={7}>
      <path d={d} stroke="#333" strokeWidth="1.300" />
    </Icon>
  );
}

function ViewPane({ tabs, children }: { tabs: ViewTab[]; children: ReactNode }) {
  return (
    <section className="flex min-w-0 flex-1 flex-col border-l-2 border-[#cac9cc]">
      <div className="flex h-[15px] items-stretch bg-[#c9c8cd]">
        {tabs.map(({ label, icon, state }) => (
          <button
            key={label}
            className={`flex w-[85px] items-center gap-[3px] pl-1 ${state === "active" ? "bg-white pr-[3px] font-bold" : state === "current" ? "bg-[#f0f0f4]" : ""}`}
          >
            {icon}
            <span className="flex-1 text-left">{label}</span>
            {state === "active" && <CloseIcon />}
          </button>
        ))}
        <button aria-label="View list" className="ml-auto flex items-center pr-1">
          <Icon w={6} h={6}>
            <path d="M0 .500h6" stroke="#111" />
            <path d="M.3 2.500h5.400L3 5.500z" fill="#111" />
          </Icon>
        </button>
      </div>
      <div className="flex min-h-0 flex-1">
        <div className="min-w-0 flex-1 bg-[#fdfdfd]">{children}</div>
        <div className="flex w-[12px] flex-col items-center justify-between bg-[#f0f0f0] pt-[3px] pb-px">
          <Chevron d="M1 5l2.500-2.500L6 5" />
          <span className="h-3 w-[10px] bg-[#cbcbcb]" />
          <Chevron d="M1 2l2.500 2.500L6 2" />
        </div>
      </div>
      <div className="flex h-[14px] items-center bg-[#f1f1f1]">
        <button className="w-[52px] pl-1 text-center text-black">1 : 20</button>
        <ViewControls />
        <div className="ml-0.5 flex flex-1 items-center justify-between">
          <Chevron d="M5 1L2.500 3.500 5 6" />
          <span className="h-[11px] w-[12px] bg-[#cbcbcb]" />
          <Chevron d="M2 1l2.500 2.500L2 6" />
        </div>
        <span className="flex w-[15px] justify-end pr-0.5">
          <Icon w={8} h={8}>
            <path d="M6 1h1M4 4h1M6 4h1M2 7h1M4 7h1M6 7h1" stroke="#aaa" />
          </Icon>
        </span>
      </div>
    </section>
  );
}

/* Outline pieces of one end frame, relative to its centre point. */
const FRAME_SEGMENTS =
  "M-31.500-42l21.500 9.500M10-23l21.500 9.500M-31 13.500l21.500 9M10 32l22 9.500M-31.500-42v19M-31.500-6l.5 19.500M31.500-13.500v19M32 24v17.500M-31.500-14l21.500 9M10 4.500l21.500 9.500M-.5-27.500L0 0M0 7l.500 20";
const FRAME_SHAPE = "M-31.500-42l63 28.500.5 55-63-28z";

function ReferenceLineDrawing() {
  return (
    <svg viewBox="209 146 400 544" className="block h-full w-full" fill="none" role="img" aria-label="Reference line in 3D view">
      <defs>
        <linearGradient id="cubeShade" x1="0" y1="0" x2="0" y2="1">
          <stop offset="0" stopColor="#f8f8f8" />
          <stop offset="1" stopColor="#e6e6e6" />
        </linearGradient>
        <filter id="soft" x="-30%" y="-100%" width="160%" height="300%">
          <feGaussianBlur stdDeviation="2" />
        </filter>
      </defs>

      <path d="M560 197h31v5h-31z" fill="#bbb" filter="url(#soft)" />
      <path d="M561.500 160.500h28.500l1 19.500-1.500 18.500h-28l-2-18.500z" fill="url(#cubeShade)" stroke="#a4a4a4" />
      <path d="M559.500 180H591" stroke="#777" />
      <text x="575" y="172" fontSize="6" fontWeight="700" textAnchor="middle" fill="#8a8a8a">TOP</text>
      <text x="575" y="192" fontSize="6" fontWeight="700" textAnchor="middle" fill="#8a8a8a">FRONT</text>

      <g fill="#ec08ee" fillOpacity=".57">
        <path d="M367 463.500L536 289l1 54-169 174.500z" />
        <path d="M336 477l169-175 63 28-169 175z" />
        <path d={FRAME_SHAPE} transform="translate(536.500 316.500)" fillOpacity=".5" />
        <path d={FRAME_SHAPE} transform="translate(367.500 491)" fillOpacity=".5" />
      </g>

      <path d="M451.500 247v313" stroke="#74747e" strokeOpacity=".85" strokeWidth="1.500" />

      <g stroke="#d9005a" strokeWidth="1.400">
        <path d="M367.500 491l169-174.500" />
        <g strokeDasharray="20.500 20.200">
          <path d="M505 302L336 477" strokeDashoffset="11" />
          <path d="M536 289L367 463.500" strokeDashoffset="9" />
          <path d="M568 330L399 505" strokeDashoffset="10" />
          <path d="M537 343L368 517.500" strokeDashoffset="9" />
        </g>
        <path d={FRAME_SEGMENTS} transform="translate(536.500 316.500)" />
        <path d={FRAME_SEGMENTS} transform="translate(367.500 491)" />
      </g>

      <g stroke="#8f9fe0" strokeWidth=".9">
        <path d="M323 469.500L491 295.500M318 467.500l48 22.500M487 292.500l18 9M368 491l-32 32" />
        <path d="M337 522c34 16 70 24 118 23" />
        <path d="M320 466l6 9M327 467l-8 5M488 291l6 9M495 292l-8 6M333 524l9-4M447 549l9-7" />
      </g>
      <path d="M451.500 530v30" strokeWidth="1.500" stroke="#7f8fc4" />
      <text transform="translate(403 377) rotate(-45)" fontSize="8" textAnchor="middle" fill="#123a9a" className="font-['Liberation_Sans',sans-serif]">1500.0</text>
      <text transform="translate(396 532) rotate(8)" fontSize="8" textAnchor="middle" fill="#1f2f8a" className="font-['Liberation_Sans',sans-serif]">34.00°</text>

      <circle cx="536.500" cy="316.500" r="2.600" fill="#5f6fae" stroke="#2c3c80" />
      <circle cx="367.500" cy="491" r="2.600" fill="#5f6fae" stroke="#2c3c80" />
      <path d="M369.500 475h2.500v3h3v2.500h-3v3h-2.500v-3h-3V478h3z" fill="#fff" stroke="#222" strokeWidth=".8" />
    </svg>
  );
}

function SolidDrawing() {
  return (
    <svg viewBox="623 146 400 544" className="block h-full w-full" fill="none" role="img" aria-label="Extruded solid in 3D view">
      <path d="M974 196l26 4 4-6-2 8-26-1z" fill="#bbb" filter="url(#soft)" />
      <path d="M970 173l9-13 27 4-6 13.500z" fill="#f6f6f6" stroke="#999" />
      <path d="M970 173l30 4.500-1.500 24-26.500-5z" fill="#f1f1f1" stroke="#999" />
      <path d="M1006 164l-2.500 22-5 15.500 1.500-24z" fill="#e2e2e2" stroke="#999" />
      <text transform="translate(989 170.500) rotate(5)" fontSize="5" fontWeight="700" textAnchor="middle" fill="#8a8a8a">TOP</text>
      <text transform="translate(985.500 190) rotate(8)" fontSize="6" fontWeight="700" textAnchor="middle" fill="#8a8a8a">FRONT</text>
      <g stroke="#1c1c1c">
        <path d="M772 261.500l188.500 32 4.500 115-184.500 38.500L661 356z" />
        <path d="M661 356v113l119.500 90 185-37.500V408.500M780.500 447v112" />
      </g>
    </svg>
  );
}

/* ---------- project browser ---------- */

type Guide = "pipe" | "tee" | "elbow" | "blank" | "minus" | "plus" | "minusTop" | "minusEnd";

function GuideCell({ kind }: { kind: Guide }) {
  const up = kind !== "blank" && kind !== "minusTop";
  const down = kind === "pipe" || kind === "tee" || kind === "minus" || kind === "plus" || kind === "minusTop";
  const box = kind === "plus" || kind.startsWith("minus");
  const arm = kind !== "blank" && kind !== "pipe";
  return (
    <Icon w={13} h={12}>
      <g stroke="#9a9a9a" strokeDasharray="1 1">
        {up && <path d="M6.500 0v6" />}
        {down && <path d="M6.500 6v6" />}
        {arm && <path d="M7 6.500h6" />}
      </g>
      {box && <path d="M4 4h5v5H4z" fill="#fff" stroke="#8c8c8c" />}
      {box && <path d="M5 6.500h3" stroke="#333" />}
      {kind === "plus" && <path d="M6.500 5v3" stroke="#333" />}
    </Icon>
  );
}

function ViewsIcon() {
  return (
    <Icon w={11} h={10}>
      <path d="M2.500.500h-2v2M8.500.500h2v2M2.500 9.500h-2v-2M8.500 9.500h2v-2" stroke="#333" />
      <path d="M3 4l1.500-1.500h3.500v3.500L6.500 7.500H3z" stroke="#444" />
    </Icon>
  );
}

function SheetsIcon() {
  return (
    <Icon w={11} h={9}>
      <path d="M.5.500h7.500l2.500 2.500v5.500H.500z" fill="#fff" stroke="#444" />
      <path d="M2.500 3h4v3.500h-4zM8.500 3v5" stroke="#555" />
    </Icon>
  );
}

function FamiliesIcon() {
  return (
    <Icon w={10} h={10}>
      <path d="M.5.500h9v9h-9z" fill="#fff" stroke="#555" />
      <path d="M5.500 1v4H1M7.500 1v6.500H1" stroke="#444" />
    </Icon>
  );
}

function GroupsIcon() {
  return (
    <Icon w={10} h={10}>
      <path d="M2 .500H.500v9H2M8 .500h1.500v9H8" stroke="#333" />
      <circle cx="4.500" cy="4" r="2" stroke="#555" />
      <path d="M4.500 4.500h3v3h-3z" fill="#ddd" stroke="#555" />
    </Icon>
  );
}

function LinksIcon() {
  return (
    <Icon w={11} h={6}>
      <rect x=".5" y="1" width="4.500" height="4" rx="2" fill="#f2c94c" stroke="#9a7412" />
      <rect x="6" y="1" width="4.500" height="4" rx="2" fill="#f2c94c" stroke="#9a7412" />
      <path d="M3.500 3h4" stroke="#8a6510" strokeWidth="1.200" />
    </Icon>
  );
}

const TREE: { label: string; guides: Guide[]; icon?: ReactNode; selected?: boolean }[] = [
  { label: "Views (all)", guides: ["minusTop"], icon: <ViewsIcon /> },
  { label: "Floor Plans", guides: ["pipe", "minus"] },
  { label: "Host", guides: ["pipe", "pipe", "elbow"] },
  { label: "Ceiling Plans", guides: ["pipe", "minus"] },
  { label: "Ref. Level", guides: ["pipe", "pipe", "elbow"] },
  { label: "3D Views", guides: ["pipe", "minus"] },
  { label: "View 1", guides: ["pipe", "pipe", "elbow"], selected: true },
  { label: "Elevations (Elevation 1)", guides: ["pipe", "minusEnd"] },
  { label: "Back", guides: ["pipe", "blank", "tee"] },
  { label: "Front", guides: ["pipe", "blank", "tee"] },
  { label: "Left", guides: ["pipe", "blank", "tee"] },
  { label: "Right", guides: ["pipe", "blank", "elbow"] },
  { label: "Sheets (all)", guides: ["tee"], icon: <SheetsIcon /> },
  { label: "Families", guides: ["plus"], icon: <FamiliesIcon /> },
  { label: "Groups", guides: ["plus"], icon: <GroupsIcon /> },
  { label: "Revit Links", guides: ["elbow"], icon: <LinksIcon /> },
];

function ProjectBrowser() {
  return (
    <aside className="flex w-[245px] shrink-0 flex-col border-l-2 border-[#cac9cc] bg-[#fefefe]">
      <div className="flex h-[14px] items-center justify-between bg-[#f1f1f4] pr-0.5 pl-0.5">
        <h2>Project Browser - Host.rfa</h2>
        <button aria-label="Close project browser">
          <CloseIcon />
        </button>
      </div>
      <ul role="tree" aria-label="Project browser">
        {TREE.map(({ label, guides, icon, selected }) => (
          <li key={label} role="treeitem" aria-level={guides.length} aria-selected={!!selected} className="flex h-3 items-center">
            {guides.map((kind, i) => (
              <GuideCell key={i} kind={kind} />
            ))}
            {icon && <span className="flex w-[13px] justify-center">{icon}</span>}
            <span className={`px-px leading-[11px] text-black ${icon ? "ml-0.5" : "ml-1"} ${selected ? "bg-[#e2e2e6] font-bold" : ""}`}>{label}</span>
          </li>
        ))}
      </ul>
    </aside>
  );
}

/* ---------- status bar ---------- */

function Pointer() {
  return <path d="M6 4v6l1.500-1.300 1 2.300 1-.5-1-2.200h2z" fill="#fff" stroke="#222" strokeWidth=".7" />;
}

function StatusBar() {
  return (
    <footer className="flex h-4 items-center justify-between border-b border-[#ececec] bg-[#cbcbcb] pt-px pr-[48px] pl-px text-black">
      <span>Reference Lines : Reference Lines</span>
      <div className="flex items-center gap-[5px]">
        <button aria-label="Select links">
          <Icon w={12} h={11}>
            <path d="M.5 2h4.500v3H.500zM6 2h4.500v3H6z" fill="#f0c52e" stroke="#a8821a" />
            <Pointer />
          </Icon>
        </button>
        <button aria-label="Select underlay elements">
          <Icon w={12} h={11}>
            <path d="M4 1h7M3 3.500h7M.5 8.500L4 1M.5 8.500h6" stroke="#2a78b4" />
            <Pointer />
          </Icon>
        </button>
        <button aria-label="Select pinned elements">
          <Icon w={12} h={11}>
            <path d="M1 1h6v3H1zM0 4.500h8M4 5v4" fill="#f2a65a" stroke="#b0432a" />
            <Pointer />
          </Icon>
        </button>
        <button aria-label="Select elements by face">
          <Icon w={12} h={11}>
            <path d="M1 1.500h5v8H1z" fill="#cfe6f7" stroke="#3b82b8" />
            <path d="M6.500.500l4 4M10.500.500l-4 4" stroke="#c9202e" strokeWidth="1.300" />
            <Pointer />
          </Icon>
        </button>
        <button aria-label="Drag elements on selection">
          <Icon w={12} h={11}>
            <path d="M3.500 0v7M0 3.500h7" stroke="#222" strokeWidth="1.200" />
            <path d="M7 .500l4 4M11 .500l-4 4" stroke="#c9202e" strokeWidth="1.300" />
            <Pointer />
          </Icon>
        </button>
        <button aria-label="Background processes">
          <Icon w={12} h={11}>
            <circle cx="6" cy="5.500" r="3.500" stroke="#999" strokeWidth="2" strokeDasharray="2 .8" />
          </Icon>
        </button>
        <button aria-label="Filter selection" className="flex items-center">
          <Icon w={12} h={11}>
            <path d="M.8 1h10.400L7.500 5.500V10L5 8.500v-3z" fill="#e6e6e6" stroke="#444" />
          </Icon>
          :1
        </button>
      </div>
    </footer>
  );
}

/* ---------- window ---------- */

export default function App() {
  return (
    <div className="flex h-screen flex-col overflow-hidden bg-[#808080] font-['Lato','Open_Sans',sans-serif] text-[8px] leading-[12px] text-[#222]">
      <TitleBar />
      <RibbonTabs />
      <Ribbon />
      <QuickAccess />
      <div className="flex h-[18px] items-center border-b border-[#c8c8c4] bg-[#e6edd9] pl-[5px] text-[#8d9287]">Modify | Reference Lines</div>
      <main className="flex min-h-0 flex-1">
        <PropertiesPalette />
        <ViewPane
          tabs={[
            { label: "Host", icon: <PagesIcon /> },
            { label: "Front", icon: <HomeIcon /> },
            { label: "View 1", icon: <BoxIcon />, state: "active" },
          ]}
        >
          <ReferenceLineDrawing />
        </ViewPane>
        <ViewPane
          tabs={[
            { label: "Geometry", icon: <PagesIcon /> },
            { label: "View 1", icon: <BoxIcon color="#888" />, state: "current" },
          ]}
        >
          <SolidDrawing />
        </ViewPane>
        <ProjectBrowser />
      </main>
      <StatusBar />
    </div>
  );
}
